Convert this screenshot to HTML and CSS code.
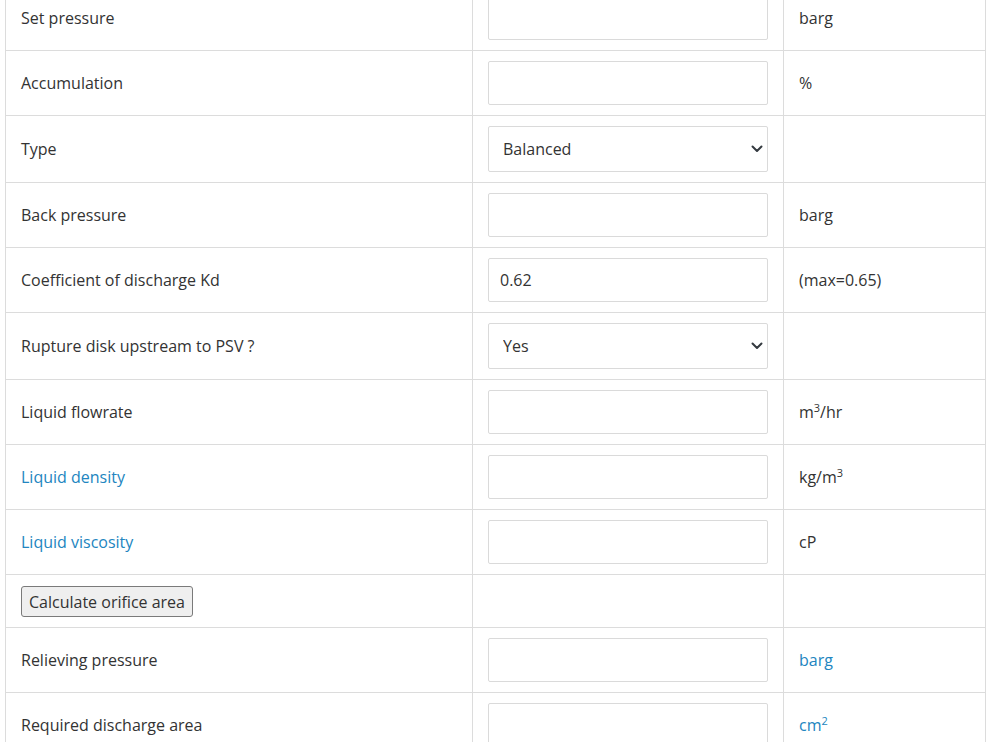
FILE: index.html
```html
<!DOCTYPE html>
<html lang="en">
<head>
<meta charset="utf-8">
<title>PSV sizing – liquid</title>
<link rel="stylesheet" href="styles.css">
</head>
<body>
<table class="calc">
  <colgroup>
    <col class="c-label">
    <col class="c-input">
    <col class="c-unit">
  </colgroup>
  <tbody>
    <tr>
      <td>Set pressure</td>
      <td><input class="field" type="text"></td>
      <td>barg</td>
    </tr>
    <tr>
      <td>Accumulation</td>
      <td><input class="field" type="text"></td>
      <td>%</td>
    </tr>
    <tr>
      <td>Type</td>
      <td>
        <div class="select-wrap">
          <select class="field select"><option>Balanced</option><option>Conventional</option></select>
          <svg class="chev" viewBox="0 0 12 8" width="12" height="8"><path d="M1.5 1.5 L6 6 L10.5 1.5" fill="none" stroke="#343a40" stroke-width="2" stroke-linecap="round" stroke-linejoin="round"/></svg>
        </div>
      </td>
      <td></td>
    </tr>
    <tr>
      <td>Back pressure</td>
      <td><input class="field" type="text"></td>
      <td>barg</td>
    </tr>
    <tr>
      <td>Coefficient of discharge Kd</td>
      <td><input class="field" type="text" value="0.62"></td>
      <td>(max=0.65)</td>
    </tr>
    <tr>
      <td>Rupture disk upstream to PSV ?</td>
      <td>
        <div class="select-wrap">
          <select class="field select"><option>Yes</option><option>No</option></select>
          <svg class="chev" viewBox="0 0 12 8" width="12" height="8"><path d="M1.5 1.5 L6 6 L10.5 1.5" fill="none" stroke="#343a40" stroke-width="2" stroke-linecap="round" stroke-linejoin="round"/></svg>
        </div>
      </td>
      <td></td>
    </tr>
    <tr>
      <td>Liquid flowrate</td>
      <td><input class="field" type="text"></td>
      <td>m<sup>3</sup>/hr</td>
    </tr>
    <tr>
      <td><a class="link" href="#">Liquid density</a></td>
      <td><input class="field" type="text"></td>
      <td>kg/m<sup>3</sup></td>
    </tr>
    <tr>
      <td><a class="link" href="#">Liquid viscosity</a></td>
      <td><input class="field" type="text"></td>
      <td>cP</td>
    </tr>
    <tr class="btn-row">
      <td><button class="btn" type="button">Calculate orifice area</button></td>
      <td></td>
      <td></td>
    </tr>
    <tr>
      <td>Relieving pressure</td>
      <td><input class="field" type="text"></td>
      <td><a class="link" href="#">barg</a></td>
    </tr>
    <tr>
      <td>Required discharge area</td>
      <td><input class="field" type="text"></td>
      <td><a class="link" href="#">cm<sup>2</sup></a></td>
    </tr>
  </tbody>
</table>
</body>
</html>
```

FILE: styles.css
```css
html, body {
  margin: 0;
  padding: 0;
  background: #ffffff;
}

body {
  font-family: "Open Sans", "Liberation Sans", sans-serif;
  font-size: 16px;
  color: #333333;
  overflow: hidden;
}

.calc {
  border-collapse: collapse;
  table-layout: fixed;
  width: 980px;
  margin: -15px 0 0 5px;
}

.c-label { width: 467px; }
.c-input { width: 311px; }
.c-unit { width: 202px; }

.calc td {
  border: 1px solid #dcdcdc;
  padding: 10px 15px;
  vertical-align: middle;
  line-height: 24px;
  height: 44px;
  box-sizing: content-box;
}

.calc tr.btn-row td {
  height: 31px;
  padding: 11px 15px 10px;
}

.calc sup {
  font-size: 11px;
  line-height: 0;
  vertical-align: 6px;
}

.link {
  color: #2285c0;
  text-decoration: none;
}

.field {
  display: block;
  box-sizing: border-box;
  width: 280px;
  height: 44px;
  margin: 0;
  padding: 0 11px;
  border: 1px solid #dadada;
  border-radius: 2px;
  background: #ffffff;
  font-family: "Open Sans", "Liberation Sans", sans-serif;
  font-size: 16px;
  color: #333333;
  outline: none;
}

.select-wrap {
  position: relative;
  width: 280px;
}

.select {
  height: 46px;
  padding: 0 14px;
  appearance: none;
  -webkit-appearance: none;
}

.chev {
  position: absolute;
  right: 5px;
  top: 19px;
  pointer-events: none;
}

.btn {
  display: block;
  box-sizing: border-box;
  height: 31px;
  padding: 0 7px;
  margin: 0;
  border: 1px solid #7a7a7a;
  border-radius: 3px;
  background: #efefef;
  font-family: "Open Sans", "Liberation Sans", sans-serif;
  font-size: 16px;
  color: #333333;
}
```
